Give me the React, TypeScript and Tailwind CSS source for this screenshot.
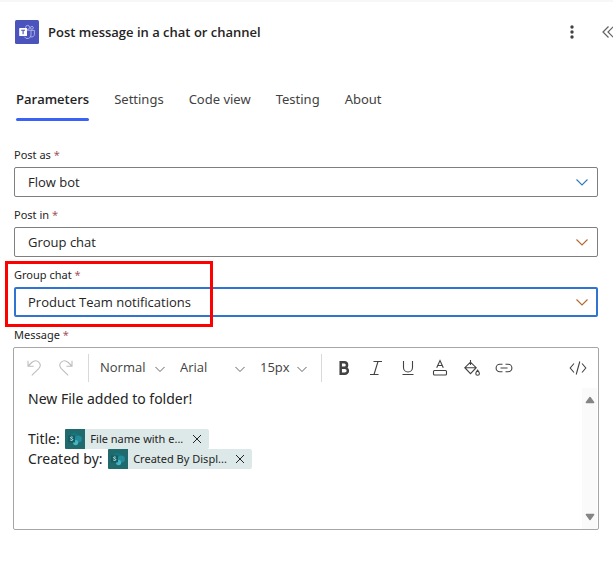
import React, { useState } from "react";
import clsx from "clsx";

const tabs = ["Parameters", "Settings", "Code view", "Testing", "About"];

function TeamsLogo() {
  return (
    <svg viewBox="0 0 24 24" className="h-6 w-6 shrink-0" aria-hidden="true">
      <rect width="24" height="24" rx="1.5" fill="#4b53bc" />
      <g fill="none" stroke="#b4b8ea" strokeWidth="0.9">
        <circle cx="12.6" cy="7.4" r="2" />
        <circle cx="16.9" cy="7.8" r="1.4" />
        <path d="M11.5 10.2h4.5v4.8a3.5 3.5 0 0 1-6.6 1.7" />
        <path d="M16 10.4h3.4v4a2.6 2.6 0 0 1-3.5 2.4" />
      </g>
      <rect x="4.2" y="8" width="7.8" height="8" rx="0.6" fill="#fff" />
      <path d="M6.2 10.3h3.8M8.1 10.3v4" stroke="#4b53bc" strokeWidth="1.1" />
    </svg>
  );
}

function SharePointLogo() {
  return (
    <svg viewBox="0 0 20 20" className="h-5 w-5 shrink-0" aria-hidden="true">
      <path d="M1 0h19v20H1a1 1 0 0 1-1-1V1a1 1 0 0 1 1-1z" fill="#20696c" />
      <circle cx="9.4" cy="7.6" r="4" fill="#14777b" />
      <circle cx="13.4" cy="10" r="3.5" fill="#24899a" />
      <circle cx="10.6" cy="13.6" r="2.6" fill="#45b4c2" />
      <rect x="3" y="6.4" width="7" height="7" rx="0.7" fill="#135e62" />
      <path
        d="M7.8 8.3c-.8-.5-2.3-.5-2.3.4 0 1.1 2.3.8 2.3 1.9 0 1-1.6 1-2.5.4"
        fill="none"
        stroke="#e4f3f3"
        strokeWidth="0.9"
      />
    </svg>
  );
}

function Chevron({ className }: { className?: string }) {
  return (
    <svg
      viewBox="0 0 12 12"
      className={clsx("pointer-events-none absolute", className)}
      fill="none"
      stroke="currentColor"
      strokeWidth="1.1"
      aria-hidden="true"
    >
      <path d="M.5 3.5 6 9l5.5-5.5" />
    </svg>
  );
}

function RequiredLabel({ id, htmlFor, children }: { id?: string; htmlFor?: string; children: string }) {
  return (
    <label id={id} htmlFor={htmlFor} className="block h-[22px] font-['Noto_Sans',sans-serif] text-[11px] leading-5 text-[#242424]">
      {children} <span className="text-[#a4545c]">*</span>
    </label>
  );
}

interface FieldProps {
  id: string;
  label: string;
  value: string;
  focused?: boolean;
  chevron: string;
}

function SelectField({ id, label, value, focused, chevron }: FieldProps) {
  return (
    <div className="relative">
      <RequiredLabel htmlFor={id}>{label}</RequiredLabel>
      <div className="relative flex items-center">
        <select
          id={id}
          defaultValue={value}
          className={clsx(
            "h-[30px] w-full appearance-none rounded-xs bg-white pt-0.5 pr-8 text-[13px] text-[#242424] outline-none",
            focused ? "border-2 border-[#2f74d0] pl-3" : "border border-[#7f7f7f] pl-[13px]"
          )}
        >
          <option>{value}</option>
        </select>
        <Chevron className={clsx("right-[10px] h-3 w-3", chevron)} />
      </div>
      {focused && (
        <div className="pointer-events-none absolute -top-1 -left-[9px] h-[66px] w-[208px] border-3 border-[#ff0000]" />
      )}
    </div>
  );
}

function ToolbarSelect({ label, value, width }: { label: string; value: string; width: string }) {
  return (
    <div className={clsx("relative flex items-center", width)}>
      <select
        aria-label={label}
        defaultValue={value}
        className="h-7 w-full appearance-none bg-transparent text-[13px] text-[#424242] outline-none"
      >
        <option>{value}</option>
      </select>
      <Chevron className="right-px mt-0.5 h-[10px] w-[10px] text-[#555]" />
    </div>
  );
}

function ToolButton({ label, children, disabled }: { label: string; children: React.ReactNode; disabled?: boolean }) {
  return (
    <button
      type="button"
      aria-label={label}
      disabled={disabled}
      className="flex h-7 w-8 shrink-0 items-center justify-center text-[#424242] disabled:text-[#bdbdbd]"
    >
      <svg viewBox="0 0 20 20" className="h-5 w-5" fill="none" stroke="currentColor" strokeWidth="1.1">
        {children}
      </svg>
    </button>
  );
}

function Token({ text }: { text: string }) {
  return (
    <span
      contentEditable={false}
      className="ml-0.5 inline-flex h-5 w-36 items-center rounded-xs bg-[#dde9e8] align-top text-[11px] text-[#242424]"
    >
      <SharePointLogo />
      <span className="flex-1 pl-[5px] whitespace-nowrap">{text}</span>
      <button type="button" aria-label={`Remove ${text}`} className="flex h-5 w-6 items-center justify-center">
        <svg viewBox="0 0 10 10" className="h-[10px] w-[10px]" fill="none" stroke="currentColor" strokeWidth="1">
          <path d="m1 1 8 8M9 1 1 9" />
        </svg>
      </button>
    </span>
  );
}

function MessageEditor() {
  return (
    <div className="-mx-px rounded-xs border border-[#a6a6a6]">
      <div className="flex h-10 items-center pl-1">
        <ToolButton label="Undo" disabled>
          <path d="M4 2.7v5.6h5.6M4.3 8l3.4-3.5c5.3-4.5 11.1 1.5 7 6.2l-6.9 6.6" />
        </ToolButton>
        <ToolButton label="Redo" disabled>
          <path d="M16 2.7v5.6h-5.6M15.7 8l-3.4-3.5c-5.3-4.5-11.1 1.5-7 6.2l6.9 6.6" />
        </ToolButton>
        <div className="mr-[11px] ml-1.5 h-7 w-px shrink-0 bg-[#d9d9d9]" />
        <div className="flex gap-[14px]">
          <ToolbarSelect label="Block style" value="Normal" width="w-[66px]" />
          <ToolbarSelect label="Font" value="Arial" width="w-[66px]" />
          <ToolbarSelect label="Font size" value="15px" width="w-12" />
        </div>
        <div className="mr-1.5 ml-[13px] h-7 w-px shrink-0 bg-[#d9d9d9]" />
        <ToolButton label="Bold">
          <path d="M6.7 4.2v11.6h4.1a3 3 0 0 0 0-6.1H6.7h3.6a2.7 2.7 0 0 0 0-5.5z" strokeWidth="2.5" />
        </ToolButton>
        <ToolButton label="Italic">
          <path d="M7.5 3.5H16M4 16.5h8.5M12 3.5l-4 13" />
        </ToolButton>
        <ToolButton label="Underline">
          <path d="M5.5 3v6.5a4.5 4.5 0 0 0 9 0V3M4.5 16.5h11" />
        </ToolButton>
        <ToolButton label="Font color">
          <path d="M6.7 9.8 10 2.5l3.3 7.3M7.8 7.5h4.4" />
          <rect x="3.5" y="12.5" width="13" height="4.5" rx="1" />
        </ToolButton>
        <ToolButton label="Background color">
          <path d="M8.5 2v5M8.5 4.2l-5.7 5.5 5.7 6 5.7-6zM2.8 9.7h11.4M15.6 12.2c-2.4 2.9-2.4 5 0 5s2.4-2.1 0-5z" />
        </ToolButton>
        <ToolButton label="Insert link">
          <path d="M8.5 6.3H5.8a3.7 3.7 0 0 0 0 7.4h2.7M11.5 6.3h2.7a3.7 3.7 0 0 1 0 7.4h-2.7M6.5 10h7" />
        </ToolButton>
        <div className="mr-1 ml-auto">
          <ToolButton label="Code view">
            <path d="M6 5.5 2.2 10 6 14.5M14 5.5l3.8 4.5-3.8 4.5M11.8 3.5l-3.6 13" />
          </ToolButton>
        </div>
      </div>
      <div className="flex min-h-[141px]">
        <div
          role="textbox"
          aria-multiline="true"
          aria-labelledby="message-label"
          contentEditable
          suppressContentEditableWarning
          className="flex-1 pt-px pl-[14px] font-['Noto_Sans',sans-serif] text-[14px] leading-5 text-[#242424] outline-none"
        >
          <p>New File added to folder!</p>
          <p>
            <br />
          </p>
          <p>
            Title: <Token text="File name with e..." />
          </p>
          <p>
            Created by: <Token text="Created By Displ..." />
          </p>
        </div>
        <div className="mr-px flex w-[15px] flex-col items-center justify-between bg-[#fafafa] py-2" aria-hidden="true">
          <svg viewBox="0 0 10 8" className="h-2 w-[10px]">
            <path d="M5 1.5 8.6 6.5H1.4z" fill="#858585" stroke="#858585" strokeWidth="1.5" strokeLinejoin="round" />
          </svg>
          <svg viewBox="0 0 10 8" className="h-2 w-[10px]">
            <path d="M5 6.5 1.4 1.5h7.2z" fill="#858585" stroke="#858585" strokeWidth="1.5" strokeLinejoin="round" />
          </svg>
        </div>
      </div>
    </div>
  );
}

export default function App() {
  const [activeTab, setActiveTab] = useState("Parameters");

  return (
    <main className="min-h-screen overflow-hidden border-t-2 border-[#f7f7f7] bg-white font-['Open_Sans','Noto_Sans',sans-serif] text-[#242424]">
      <header className="flex items-center pt-[18px] pl-[15px]">
        <TeamsLogo />
        <h1 className="ml-[9px] flex-1 text-[13px] leading-6 font-semibold">Post message in a chat or channel</h1>
        <button type="button" aria-label="More actions" className="flex h-6 w-6 items-center justify-center">
          <svg viewBox="0 0 4 16" className="h-4 w-1" fill="#424242">
            <circle cx="2" cy="3" r="1.7" />
            <circle cx="2" cy="8" r="1.7" />
            <circle cx="2" cy="13" r="1.7" />
          </svg>
        </button>
        <button type="button" aria-label="Collapse panel" className="-mr-1 ml-[17px] flex h-6 w-4 items-center">
          <svg viewBox="0 0 16 16" className="h-4 w-4" fill="none" stroke="#616161" strokeWidth="1.2">
            <path d="M7.5 2.5 2 8l5.5 5.5M12.5 2.5 7 8l5.5 5.5" />
          </svg>
        </button>
      </header>

      <nav className="mt-9 flex gap-[25px] pl-4" role="tablist">
        {tabs.map((tab) => (
          <button
            key={tab}
            type="button"
            role="tab"
            aria-selected={tab === activeTab}
            onClick={() => setActiveTab(tab)}
            className={clsx(
              "flex flex-col gap-[6px] text-[13px]",
              tab === activeTab ? "font-semibold text-[#242424]" : "font-['Noto_Sans',sans-serif] text-[#424242]"
            )}
          >
            <span className="flex h-8 items-end pb-px leading-6">{tab}</span>
            <span className={clsx("h-[3px] w-full rounded-full", tab === activeTab && "bg-[#3a62f5]")} />
          </button>
        ))}
      </nav>

      <form className="flex flex-col gap-2 pt-6 pr-[15px] pl-[14px]">
        <SelectField id="post-as" label="Post as" value="Flow bot" chevron="text-[#2f79b9]" />
        <SelectField id="post-in" label="Post in" value="Group chat" chevron="text-[#b5662c]" />
        <SelectField id="group-chat" label="Group chat" value="Product Team notifications" focused chevron="text-[#b5662c]" />
        <div>
          <RequiredLabel id="message-label">Message</RequiredLabel>
          <MessageEditor />
        </div>
      </form>
    </main>
  );
}
